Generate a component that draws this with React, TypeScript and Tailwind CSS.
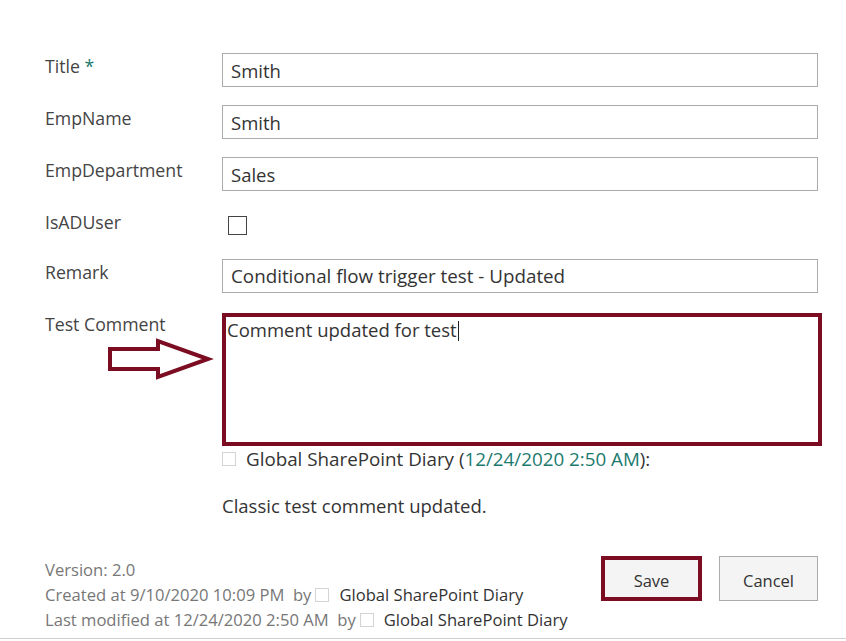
export default function App() {
  const font = { fontFamily: '"Open Sans", "Noto Sans", sans-serif' };
  return (
    <div
      className="relative h-[641px] w-[846px] overflow-hidden bg-white text-[#444]"
      style={font}
    >
      <div className="pl-[45px] pr-[28px] pt-[53px]">
        <div className="grid grid-cols-[177px_1fr] gap-y-[18px]">
          <div className="text-[17.7px] leading-[26px]">
            Title <span className="text-[#1b7a6e]">*</span>
          </div>
          <div className="flex h-[34px] items-center border border-[#ababab] px-[8px] pt-[2px] text-[18.5px] text-[#333]">
            Smith
          </div>

          <div className="text-[17.7px] leading-[26px]">EmpName</div>
          <div className="flex h-[34px] items-center border border-[#ababab] px-[8px] pt-[2px] text-[18.5px] text-[#333]">
            Smith
          </div>

          <div className="text-[17.7px] leading-[26px]">EmpDepartment</div>
          <div className="flex h-[34px] items-center border border-[#ababab] px-[8px] pt-[2px] text-[18.5px] text-[#333]">
            Sales
          </div>

          <div className="text-[17.7px] leading-[26px]">IsADUser</div>
          <div className="h-[32px] pl-[6px] pt-[7px]">
            <div className="h-[19px] w-[19px] border border-[#444] bg-white" />
          </div>

          <div className="text-[17.7px] leading-[26px]">Remark</div>
          <div className="flex h-[34px] items-center border border-[#ababab] px-[8px] pt-[1px] text-[18.8px] text-[#333]">
            Conditional flow trigger test - Updated
          </div>

          <div className="relative text-[17.7px] leading-[26px]">
            Test Comment
            <svg
              className="absolute left-[60px] top-[24px]"
              width="110"
              height="48"
              viewBox="0 0 110 48"
              fill="none"
            >
              <polygon
                points="5,14 53,14 53,6 103,24 53,42 53,34 5,34"
                stroke="#7b0c22"
                strokeWidth="4"
                strokeLinejoin="miter"
              />
            </svg>
          </div>
          <div className="-mr-[4px] mt-[2px]">
            <div className="h-[133px] w-[600px] border-4 border-[#7b0c22] pl-[1px] pt-[1px] text-[18.5px] leading-[24px] text-[#333]">
              Comment updated for test
              <span className="ml-[1px] inline-block h-[20px] w-[1px] bg-[#222] align-[-4px]" />
            </div>
            <div className="mt-[1px] flex items-center text-[18.8px] leading-[24px] text-[#333]">
              <span className="mr-[10px] h-[14px] w-[14px] border border-[#d4d4d4]" />
              Global SharePoint Diary (
              <span className="text-[#1b7a6e]">12/24/2020 2:50 AM</span>):
            </div>
            <div className="mt-[23px] text-[18.5px] leading-[24px] text-[#333]">
              Classic test comment updated.
            </div>
          </div>
        </div>

        <div className="mt-[39px] flex items-start justify-between">
          <div className="text-[16.6px] leading-[25px] text-[#777]">
            <div>Version: 2.0</div>
            <div className="flex items-center">
              Created at 9/10/2020 10:09 PM&nbsp; by
              <span className="ml-[4px] mr-[10px] h-[14px] w-[14px] border border-[#d4d4d4]" />
              <span className="text-[#333]">Global SharePoint Diary</span>
            </div>
            <div className="flex items-center">
              Last modified at 12/24/2020 2:50 AM&nbsp; by
              <span className="ml-[4px] mr-[10px] h-[14px] w-[14px] border border-[#d4d4d4]" />
              <span className="text-[#333]">Global SharePoint Diary</span>
            </div>
          </div>
          <div className="-mt-[1px] flex gap-[17px]">
            <button className="h-[45px] w-[101px] border-4 border-[#7b0c22] bg-[#f4f4f4] pt-[5px] text-[16.5px] text-[#333]">
              Save
            </button>
            <button className="h-[45px] w-[99px] border border-[#ababab] bg-[#f4f4f4] pt-[5px] text-[16.5px] text-[#333]">
              Cancel
            </button>
          </div>
        </div>
      </div>
      <div className="absolute bottom-[2px] left-0 right-0 h-[1px] bg-[#cfcfcf]" />
    </div>
  );
}
